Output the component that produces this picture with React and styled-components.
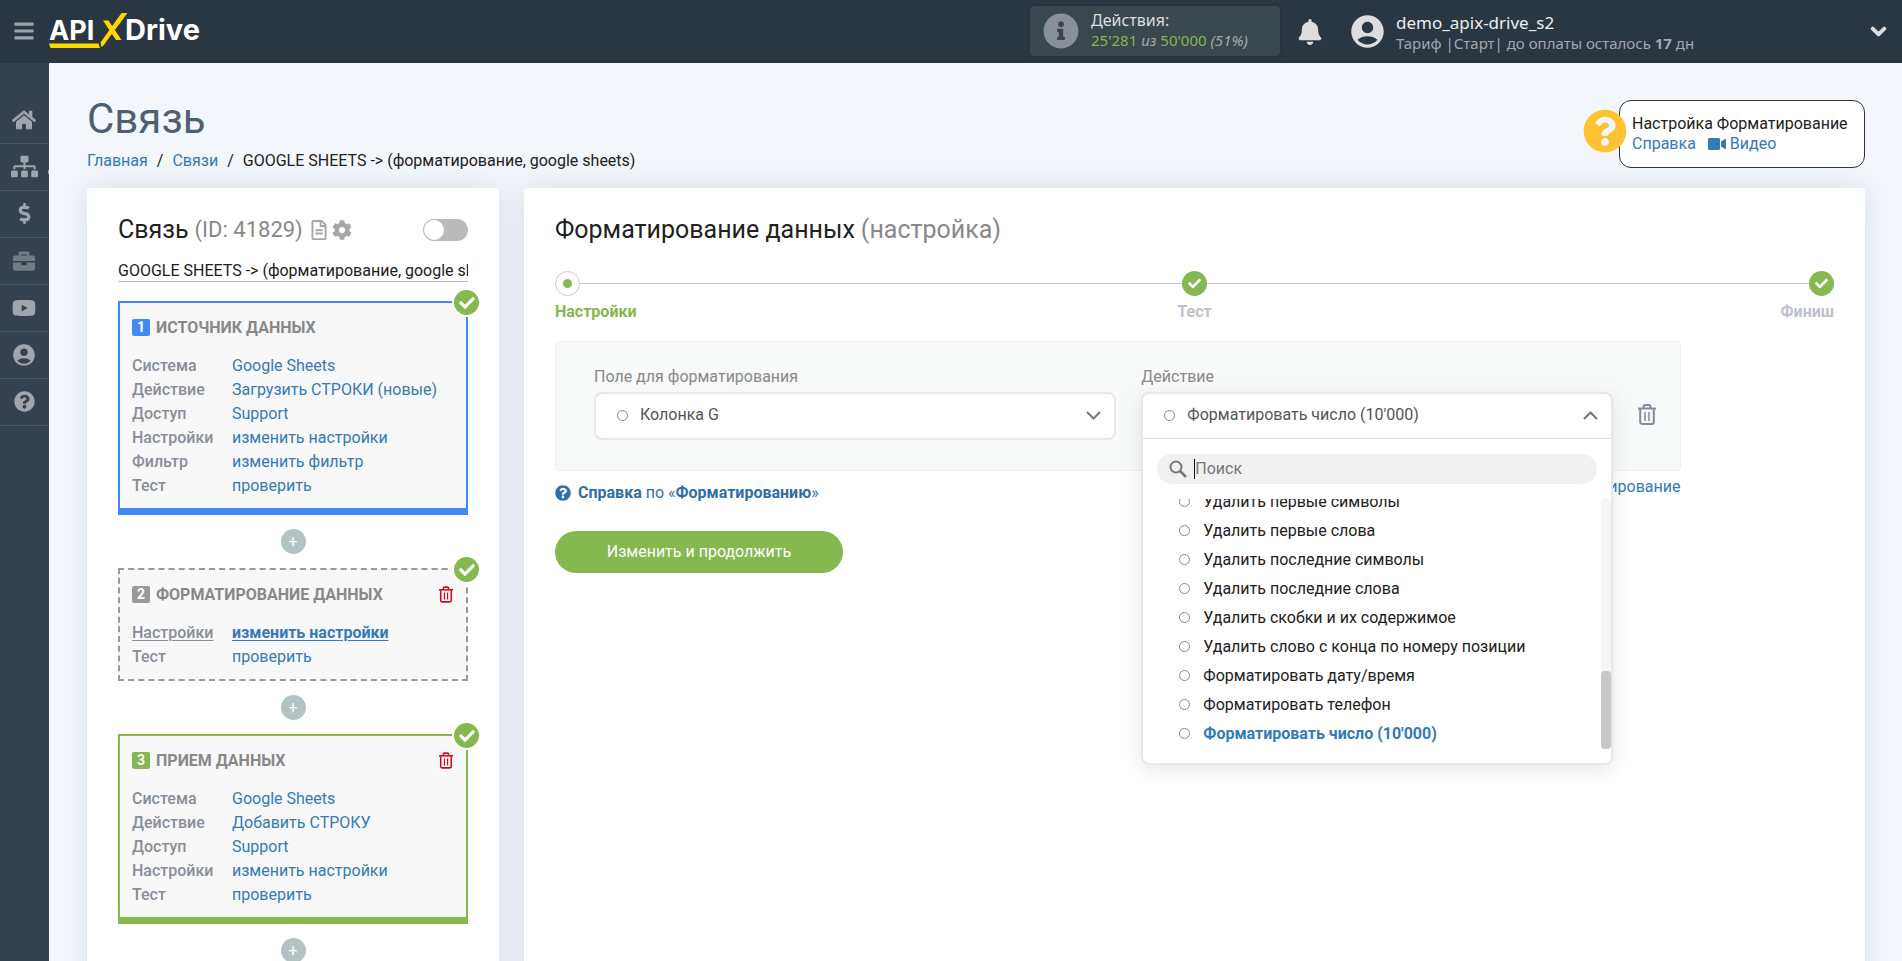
import React from "react";
import styled, { createGlobalStyle, css } from "styled-components";
import {
  FaBars,
  FaBell,
  FaBriefcase,
  FaCheck,
  FaChevronDown,
  FaCog,
  FaDollarSign,
  FaHome,
  FaInfoCircle,
  FaQuestionCircle,
  FaRegFileAlt,
  FaSitemap,
  FaVideo,
  FaYoutube,
} from "react-icons/fa";
import { MdAccountCircle } from "react-icons/md";

const GlobalStyle = createGlobalStyle`
  * {
    box-sizing: border-box;
  }

  body {
    margin: 0;
    background: #f3f7fc;
    color: #212121;
    font-family: Roboto, "Liberation Sans", sans-serif;
    font-size: 16px;
    line-height: 20px;
  }

  a {
    color: #337ab7;
    text-decoration: none;
  }

  button,
  input {
    font: inherit;
  }

  button {
    margin: 0;
    padding: 0;
    border: 0;
    background: none;
    cursor: pointer;
  }

  svg {
    display: block;
    flex: none;
  }
`;

const Shell = styled.div`
  display: flex;
  flex-direction: column;
  height: 100vh;
`;

const TopBar = styled.header`
  display: flex;
  align-items: center;
  flex: none;
  height: 63px;
  padding: 0 15px 0 13px;
  background: #2b3643;
  color: #ddd;
  font-family: "Noto Sans", "Open Sans", sans-serif;
`;

const MenuButton = styled.button`
  margin-right: 14px;
  padding-bottom: 2px;
  color: #9ea4aa;
`;

const LogoLink = styled.a`
  flex: 1;
`;

const Usage = styled.div`
  display: flex;
  align-items: center;
  width: 250px;
  height: 50px;
  margin-bottom: 1px;
  padding-left: 13px;
  gap: 12px;
  border-radius: 4px;
  background: #3b474f;
  box-shadow: 0 0 4px rgba(0, 0, 0, 0.2);

  svg {
    color: #8a9097;
  }
`;

const UsageText = styled.div`
  padding-bottom: 2px;
`;

const UsageTitle = styled.div`
  font-size: 16px;
`;

const UsageNumbers = styled.div`
  font-size: 15px;
  color: #aaa;

  b {
    font-weight: 400;
    color: #85b84f;
  }
`;

const BellButton = styled.button`
  margin: 0 25px 0 17px;
  color: #ddd;
`;

const Account = styled.button`
  display: flex;
  align-items: center;
  width: 539px;
  gap: 9px;
  color: #ddd;
  text-align: left;
`;

const AccountText = styled.span`
  flex: 1;
  padding-top: 2px;
`;

const AccountName = styled.span`
  display: block;
  font-size: 17px;
  line-height: 20px;
  color: #eee;
`;

const AccountPlan = styled.span`
  display: block;
  font-size: 15px;
  line-height: 20px;
  color: #a2a8ae;
`;

const Body = styled.div`
  display: flex;
  flex: 1;
  min-height: 0;
`;

const SideBar = styled.nav`
  flex: none;
  width: 49px;
  padding-top: 34px;
  background: #364150;
`;

const SideItem = styled.a`
  position: relative;
  display: flex;
  align-items: center;
  justify-content: center;
  height: 47px;
  padding: 0 1px 1px 0;
  border-bottom: 1px solid #4a5564;
  color: ${({ $dim }) => ($dim ? "#737b85" : "#a0a5ab")};

  ${({ $marked }) =>
    $marked &&
    css`
      &::after {
        content: "";
        position: absolute;
        right: 0;
        bottom: 16px;
        width: 1px;
        height: 4px;
        background: #a0a5ab;
      }
    `}
`;

const Main = styled.main`
  flex: 1;
  min-width: 0;
  padding: 31px 37px 30px 38px;
  overflow-y: auto;
  scrollbar-width: none;
`;

const PageHead = styled.div`
  display: flex;
  justify-content: space-between;
  align-items: flex-start;
  margin-bottom: 17px;
`;

const PageTitle = styled.h1`
  margin: 0 0 7px;
  font-size: 42px;
  line-height: 50px;
  font-weight: 400;
  color: #4f5f6f;
`;

const Breadcrumbs = styled.nav`
  display: flex;
  gap: 9px;
`;

const Help = styled.div`
  display: flex;
  align-items: flex-start;
  padding-top: 6px;
`;

const HelpIcon = styled(FaQuestionCircle)`
  z-index: 1;
  margin: 9px -8px 0 0;
  color: #ffc233;
`;

const HelpBox = styled.div`
  min-width: 246px;
  padding: 13px 12px;
  border: 1px solid #333;
  border-radius: 12px;
  background: #fff;
`;

const HelpLinks = styled.div`
  display: flex;
  gap: 12px;

  a {
    display: flex;
    align-items: center;
    gap: 4px;
  }
`;

const Columns = styled.div`
  display: grid;
  grid-template-columns: minmax(0, 412fr) minmax(0, 1341fr);
  gap: 25px;
`;

const Card = styled.section`
  padding: 30px 31px;
  border-radius: 4px;
  background: #fff;
  box-shadow: 0 0 30px rgba(70, 80, 100, 0.14);
`;

const CardTitle = styled.h2`
  display: flex;
  align-items: center;
  gap: 6px;
  margin: 0;
  font-size: 25px;
  line-height: 24px;
  font-weight: 400;

  svg {
    color: #a6a6a6;
  }
`;

const TitleNote = styled.small`
  font-size: ${({ $compact }) => ($compact ? 22 : 25)}px;
  color: #888;
`;

const TitleActions = styled.span`
  display: flex;
  gap: 3px;
`;

const IconButton = styled.button`
  color: ${({ $color }) => $color};
`;

const Toggle = styled.input`
  appearance: none;
  display: flex;
  width: 45px;
  height: 22px;
  margin: 0 0 0 auto;
  padding: 1px;
  border-radius: 11px;
  background: #bbb;
  cursor: pointer;

  &::before {
    content: "";
    width: 20px;
    height: 20px;
    border-radius: 50%;
    background: #fff;
  }

  &:checked {
    justify-content: flex-end;
    background: #85b84f;
  }
`;

const NameInput = styled.input`
  display: block;
  width: 100%;
  height: 22px;
  margin: 18px 0 19px;
  padding: 0;
  border: 0;
  border-bottom: 1px solid #bbb;
  outline: none;
  background: none;
  color: #212121;
`;

const Step = styled.section`
  position: relative;
  padding: 13px 13px 10px 12px;
  border: 2px ${({ $dashed }) => ($dashed ? "dashed" : "solid")}
    ${({ $color }) => $color};
  border-bottom-width: ${({ $dashed }) => ($dashed ? 2 : 7)}px;
  background: #f8f8f8;
`;

const StepHead = styled.div`
  display: flex;
  align-items: center;
  height: 24px;
  margin-bottom: 14px;
  gap: 6px;

  button {
    padding-bottom: 2px;
  }
`;

const StepNumber = styled.span`
  width: 18px;
  height: 17px;
  margin-bottom: 2px;
  border-radius: 2px;
  background: ${({ $color }) => $color};
  color: #fff;
  font-size: 14px;
  line-height: 17px;
  font-weight: 700;
  text-align: center;
`;

const StepTitle = styled.h3`
  flex: 1;
  margin: 0;
  font-size: 16px;
  font-weight: 700;
  color: #888;
`;

const StepDone = styled.span`
  position: absolute;
  top: -15px;
  right: -15px;
  display: flex;
  align-items: center;
  justify-content: center;
  width: 29px;
  height: 29px;
  border: 2px solid #fff;
  border-radius: 50%;
  background: #85b84f;
  color: #fff;
`;

const StepRow = styled.div`
  display: flex;
  line-height: 24px;

  span {
    width: 100px;
    color: #888e98;
  }

  b {
    font-weight: 500;
  }

  ${({ $active }) =>
    $active &&
    css`
      b,
      a {
        text-decoration: underline;
        text-underline-offset: 2px;
        text-decoration-thickness: 1px;
      }

      a {
        font-weight: 700;
      }
    `}
`;

const AddButton = styled.button`
  display: block;
  width: 25px;
  height: 25px;
  margin: 14px auto;
  border-radius: 50%;
  background: #b3c3c3;
  color: #fff;
  font-size: 16px;
  line-height: 23px;
`;

const Progress = styled.ol`
  display: flex;
  justify-content: space-between;
  margin: 29px 0 19px;
  padding: 0;
  list-style: none;
  background: linear-gradient(#c8c8c8, #c8c8c8) 0 12px / 100% 1px no-repeat;
`;

const ProgressItem = styled.li`
  display: flex;
  flex-direction: column;
  flex: ${({ $align }) => ($align === "center" ? "none" : "1")};
  align-items: ${({ $align }) => $align};
  gap: 6px;
  font-weight: 700;
  color: ${({ $current }) => ($current ? "#85b84f" : "#bcc1cb")};
`;

const ProgressDot = styled.span`
  display: flex;
  align-items: center;
  justify-content: center;
  width: 25px;
  height: 25px;
  border-radius: 50%;
  background: #85b84f;
  color: #fff;

  ${({ $current }) =>
    $current &&
    css`
      border: 1px solid #ccc;
      background: #fff;

      &::before {
        content: "";
        width: 9px;
        height: 9px;
        border-radius: 50%;
        background: #85b84f;
      }
    `}
`;

const Settings = styled.div`
  width: 88%;
`;

const Panel = styled.div`
  display: flex;
  align-items: flex-start;
  height: 130px;
  padding: 25px 24px 0 38px;
  gap: 25px;
  border: 1px solid #eceeee;
  border-radius: 4px;
  background: #f8f9f9;
`;

const Field = styled.div`
  flex: ${({ $grow }) => $grow} 1 0;
  min-width: 0;
`;

const FieldLabel = styled.div`
  margin-bottom: 5px;
  color: #888;
`;

const SelectSlot = styled.div`
  position: relative;
  height: 48px;
`;

const SelectBox = styled.div`
  border: 2px solid #e6e7e7;
  border-radius: 8px;
  background: #fff;

  ${({ $open }) =>
    $open &&
    css`
      position: absolute;
      top: 0;
      left: 0;
      right: 0;
      z-index: 2;
      box-shadow: 0 5px 20px rgba(0, 0, 0, 0.1);
    `}
`;

const SelectButton = styled.button`
  display: flex;
  align-items: center;
  width: 100%;
  height: 44px;
  padding: 0 13px 2px 21px;
  gap: 12px;
  color: #555;
  text-align: left;
`;

const SelectText = styled.span`
  flex: 1;
`;

const Bullet = styled.i`
  flex: none;
  width: 11px;
  height: 11px;
  border: 1px solid #888;
  border-radius: 50%;
`;

const SelectMenu = styled.div`
  padding: 15px 0 14px;
  border-top: 1px solid #ddd;
`;

const SearchBox = styled.label`
  display: flex;
  align-items: center;
  height: 30px;
  margin: 0 14px 15px;
  padding: 0 12px;
  gap: 7px;
  border-radius: 15px;
  background: #f1f1f1;
  color: #777;

  input {
    flex: 1;
    min-width: 0;
    padding: 0 0 0 1px;
    border: 0;
    outline: none;
    background: none;
  }

  input::placeholder {
    color: #777;
  }
`;

const Caret = styled.span`
  width: 1px;
  height: 20px;
  margin-right: -8px;
  background: #111;
`;

const OptionArea = styled.div`
  display: flex;
  height: 250px;
`;

// The list is pinned to its end, where the chosen option stands.
const OptionList = styled.ul`
  display: flex;
  flex: 1;
  flex-direction: column;
  justify-content: flex-end;
  margin: 0;
  padding: 0 0 1px 36px;
  overflow: hidden;
  list-style: none;
`;

const Option = styled.li`
  display: flex;
  align-items: center;
  flex: none;
  height: 29px;
  gap: 13px;
  font-weight: ${({ $selected }) => ($selected ? 700 : 400)};
  color: ${({ $selected }) => ($selected ? "#337ab7" : "#212121")};
`;

const ScrollTrack = styled.div`
  display: flex;
  align-items: flex-end;
  width: 10px;
  border-radius: 4px;
  background: #f5f5f5;

  &::after {
    content: "";
    width: 10px;
    height: 78px;
    border-radius: 4px;
    background: #c8c8c8;
  }
`;

const RemoveSlot = styled.div`
  padding-top: 37px;
`;

const UnderPanel = styled.div`
  display: flex;
  justify-content: space-between;
  align-items: flex-start;
  padding-top: 6px;
`;

const HelpLink = styled.a`
  display: flex;
  align-items: center;
  gap: 7px;
  padding-top: 6px;
  color: #2f6fa3;
`;

const Submit = styled.button`
  width: 288px;
  height: 42px;
  margin-top: 28px;
  border-radius: 21px;
  background: #85b84f;
  color: #fff;
`;

const sideItems = [
  { label: "Главная", icon: FaHome, size: 24 },
  { label: "Связи", icon: FaSitemap, size: 27, marked: true },
  { label: "Оплата", icon: FaDollarSign, size: 21 },
  { label: "Проекты", icon: FaBriefcase, size: 22, dim: true },
  { label: "Видео", icon: FaYoutube, size: 24 },
  { label: "Профиль", icon: MdAccountCircle, size: 26 },
  { label: "Справка", icon: FaQuestionCircle, size: 21 },
];

const steps = [
  {
    title: "ИСТОЧНИК ДАННЫХ",
    color: "#3f8af7",
    rows: [
      ["Система", "Google Sheets"],
      ["Действие", "Загрузить СТРОКИ (новые)"],
      ["Доступ", "Support"],
      ["Настройки", "изменить настройки"],
      ["Фильтр", "изменить фильтр"],
      ["Тест", "проверить"],
    ],
  },
  {
    title: "ФОРМАТИРОВАНИЕ ДАННЫХ",
    color: "#999",
    dashed: true,
    removable: true,
    active: "Настройки",
    rows: [
      ["Настройки", "изменить настройки"],
      ["Тест", "проверить"],
    ],
  },
  {
    title: "ПРИЕМ ДАННЫХ",
    color: "#85b84f",
    removable: true,
    rows: [
      ["Система", "Google Sheets"],
      ["Действие", "Добавить СТРОКУ"],
      ["Доступ", "Support"],
      ["Настройки", "изменить настройки"],
      ["Тест", "проверить"],
    ],
  },
];

const options = [
  "Удалить первые символы",
  "Удалить первые слова",
  "Удалить последние символы",
  "Удалить последние слова",
  "Удалить скобки и их содержимое",
  "Удалить слово с конца по номеру позиции",
  "Форматировать дату/время",
  "Форматировать телефон",
  "Форматировать число (10'000)",
];

function Logo() {
  return (
    <svg width="156" height="38" viewBox="0 0 156 38" aria-label="ApiX-Drive">
      <g fill="#fff" fontFamily="Inter, sans-serif" fontWeight="700">
        <text x="0" y="27" fontSize="27">
          API
        </text>
        <text x="76" y="27" fontSize="29">
          Drive
        </text>
      </g>
      <path d="M0 30.5H49.5L51 35H1.5Z" fill="#ffd600" />
      <path d="M51.5 29.5L72.5 0H78.5L54 33L52.5 34Z" fill="#ffd600" />
      <path d="M54 7.5H59.5L72.5 27H67Z" fill="#ffd600" />
    </svg>
  );
}

function Trash({ width, height }) {
  return (
    <svg
      width={width}
      height={height}
      viewBox="0 0 18 21"
      fill="none"
      stroke="currentColor"
      strokeWidth="2"
    >
      <path d="M0 4.5h18" />
      <path d="M5.5 4V3a2 2 0 0 1 2-2h3a2 2 0 0 1 2 2v1" />
      <path d="M2.2 5v13a2 2 0 0 0 2 2h9.6a2 2 0 0 0 2-2V5" />
      <path d="M7 8v9M11 8v9" strokeWidth="1.5" />
    </svg>
  );
}

function Arrow({ up }) {
  return (
    <svg
      width="15"
      height="9"
      viewBox="0 0 15 9"
      fill="none"
      stroke="#777"
      strokeWidth="2"
    >
      <path d={up ? "M1 8l6.5-6.5L14 8" : "M1 1l6.5 6.5L14 1"} />
    </svg>
  );
}

function SearchIcon() {
  return (
    <svg
      width="18"
      height="18"
      viewBox="0 0 18 18"
      fill="none"
      stroke="currentColor"
      strokeWidth="2"
    >
      <circle cx="7" cy="7" r="5.5" />
      <path d="M11 11l6 6" strokeWidth="2.6" />
    </svg>
  );
}

function StepCard({ step, number }) {
  return (
    <Step $color={step.color} $dashed={step.dashed}>
      <StepDone>
        <FaCheck size={16} />
      </StepDone>
      <StepHead>
        <StepNumber $color={step.color}>{number}</StepNumber>
        <StepTitle>{step.title}</StepTitle>
        {step.removable && (
          <IconButton $color="#cc0a1e" aria-label="Удалить">
            <Trash width={14} height={17} />
          </IconButton>
        )}
      </StepHead>
      {step.rows.map(([label, value]) => (
        <StepRow key={label} $active={label === step.active}>
          <span>
            <b>{label}</b>
          </span>
          <a href="#step">{value}</a>
        </StepRow>
      ))}
    </Step>
  );
}

function ActionSelect() {
  return (
    <SelectBox $open>
      <SelectButton aria-expanded="true" aria-labelledby="action-label">
        <Bullet />
        <SelectText>{options[options.length - 1]}</SelectText>
        <Arrow up />
      </SelectButton>
      <SelectMenu>
        <SearchBox>
          <SearchIcon />
          <Caret />
          <input type="text" placeholder="Поиск" aria-label="Поиск" />
        </SearchBox>
        <OptionArea>
          <OptionList role="listbox" aria-labelledby="action-label">
            {options.map((option, index) => {
              const selected = index === options.length - 1;
              return (
                <Option
                  key={option}
                  role="option"
                  aria-selected={selected}
                  $selected={selected}
                >
                  <Bullet />
                  {option}
                </Option>
              );
            })}
          </OptionList>
          <ScrollTrack />
        </OptionArea>
      </SelectMenu>
    </SelectBox>
  );
}

function App() {
  return (
    <Shell>
      <GlobalStyle />
      <TopBar>
        <MenuButton aria-label="Меню">
          <FaBars size={22} />
        </MenuButton>
        <LogoLink href="#home">
          <Logo />
        </LogoLink>
        <Usage>
          <FaInfoCircle size={36} />
          <UsageText>
            <UsageTitle>Действия:</UsageTitle>
            <UsageNumbers>
              <b>25'281</b> <i>из</i> <b>50'000</b> <i>(51%)</i>
            </UsageNumbers>
          </UsageText>
        </Usage>
        <BellButton aria-label="Уведомления">
          <FaBell size={26} />
        </BellButton>
        <Account>
          <MdAccountCircle size={39} />
          <AccountText>
            <AccountName>demo_apix-drive_s2</AccountName>
            <AccountPlan>
              Тариф |Старт| до оплаты осталось <b>17</b> дн
            </AccountPlan>
          </AccountText>
          <FaChevronDown size={17} stroke="currentColor" strokeWidth="36" />
        </Account>
      </TopBar>
      <Body>
        <SideBar>
          {sideItems.map(({ label, icon: Icon, size, dim, marked }) => (
            <SideItem
              key={label}
              href="#menu"
              aria-label={label}
              $dim={dim}
              $marked={marked}
            >
              <Icon size={size} />
            </SideItem>
          ))}
        </SideBar>
        <Main>
          <PageHead>
            <div>
              <PageTitle>Связь</PageTitle>
              <Breadcrumbs>
                <a href="#home">Главная</a>
                <span>/</span>
                <a href="#links">Связи</a>
                <span>/</span>
                <span>GOOGLE SHEETS -&gt; (форматирование, google sheets)</span>
              </Breadcrumbs>
            </div>
            <Help>
              <HelpIcon size={44} />
              <HelpBox>
                <div>Настройка Форматирование</div>
                <HelpLinks>
                  <a href="#help">Справка</a>
                  <a href="#video">
                    <FaVideo size={18} />
                    Видео
                  </a>
                </HelpLinks>
              </HelpBox>
            </Help>
          </PageHead>
          <Columns>
            <Card>
              <CardTitle>
                Связь <TitleNote $compact>(ID: 41829)</TitleNote>
                <TitleActions>
                  <IconButton aria-label="Журнал">
                    <FaRegFileAlt size={20} />
                  </IconButton>
                  <IconButton aria-label="Настройки">
                    <FaCog size={20} />
                  </IconButton>
                </TitleActions>
                <Toggle type="checkbox" role="switch" aria-label="Включить связь" />
              </CardTitle>
              <NameInput
                type="text"
                aria-label="Название связи"
                defaultValue="GOOGLE SHEETS -> (форматирование, google sheets)"
              />
              {steps.map((step, index) => (
                <React.Fragment key={step.title}>
                  <StepCard step={step} number={index + 1} />
                  <AddButton aria-label="Добавить шаг">+</AddButton>
                </React.Fragment>
              ))}
            </Card>
            <Card>
              <CardTitle>
                Форматирование данных <TitleNote>(настройка)</TitleNote>
              </CardTitle>
              <Progress>
                <ProgressItem $align="flex-start" $current>
                  <ProgressDot $current />
                  Настройки
                </ProgressItem>
                <ProgressItem $align="center">
                  <ProgressDot>
                    <FaCheck size={13} />
                  </ProgressDot>
                  Тест
                </ProgressItem>
                <ProgressItem $align="flex-end">
                  <ProgressDot>
                    <FaCheck size={13} />
                  </ProgressDot>
                  Финиш
                </ProgressItem>
              </Progress>
              <Settings>
                <Panel>
                  <Field $grow={521}>
                    <FieldLabel id="field-label">Поле для форматирования</FieldLabel>
                    <SelectBox>
                      <SelectButton aria-expanded="false" aria-labelledby="field-label">
                        <Bullet />
                        <SelectText>Колонка G</SelectText>
                        <Arrow />
                      </SelectButton>
                    </SelectBox>
                  </Field>
                  <Field $grow={470}>
                    <FieldLabel id="action-label">Действие</FieldLabel>
                    <SelectSlot>
                      <ActionSelect />
                    </SelectSlot>
                  </Field>
                  <RemoveSlot>
                    <IconButton $color="#858a99" aria-label="Удалить поле">
                      <Trash width={18} height={21} />
                    </IconButton>
                  </RemoveSlot>
                </Panel>
                <UnderPanel>
                  <HelpLink href="#help">
                    <FaQuestionCircle size={16} />
                    <span>
                      <b>Справка</b> по «<b>Форматированию</b>»
                    </span>
                  </HelpLink>
                  <a href="#add">Добавить форматирование</a>
                </UnderPanel>
              </Settings>
              <Submit>Изменить и продолжить</Submit>
            </Card>
          </Columns>
        </Main>
      </Body>
    </Shell>
  );
}

export default App;
